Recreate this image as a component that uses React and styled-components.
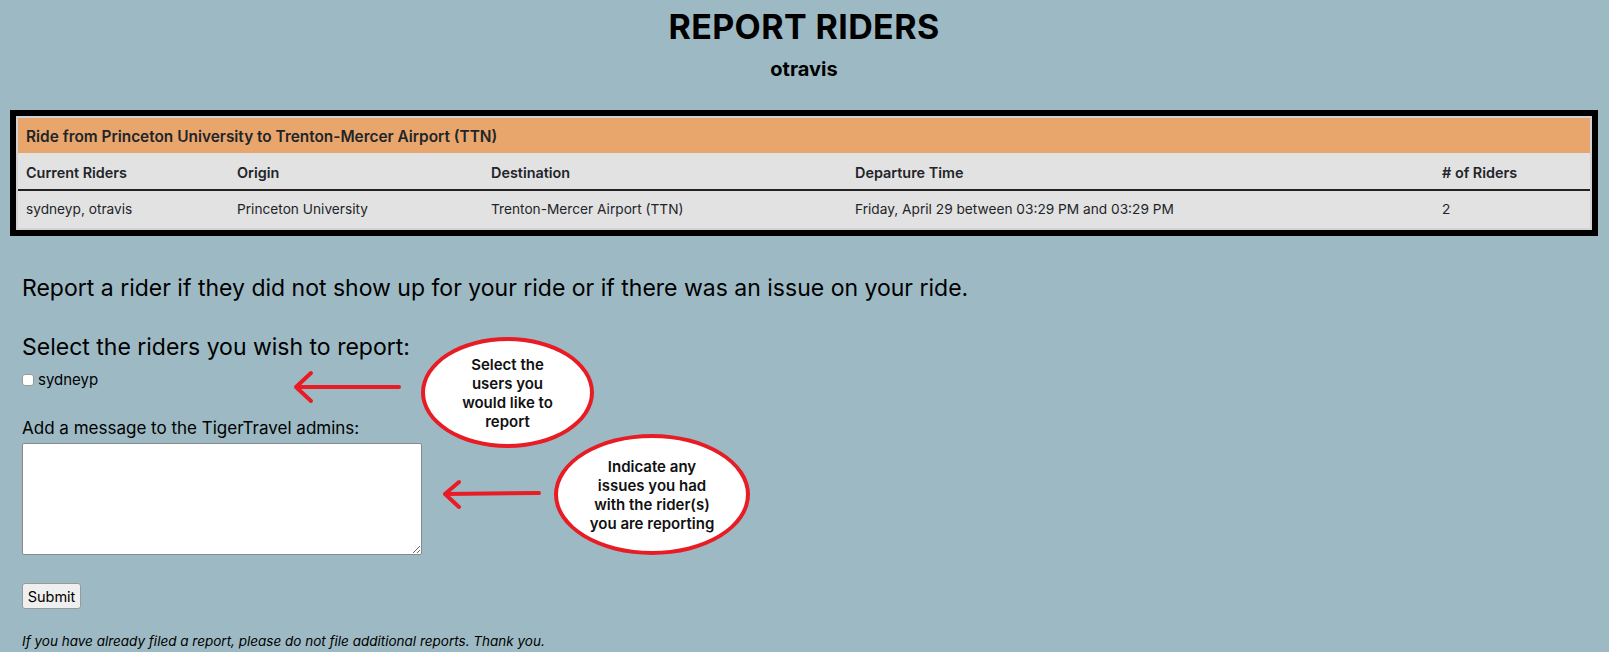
import React from "react";
import styled, { createGlobalStyle } from "styled-components";

const GlobalStyle = createGlobalStyle`
  html, body {
    margin: 0;
    padding: 0;
    background: #9dbac4;
    overflow: hidden;
  }
  body {
    font-family: Inter, "Liberation Sans", sans-serif;
    color: #000;
  }
  * { box-sizing: border-box; }
`;

const Page = styled.div`
  position: relative;
  min-height: 652px;
  padding: 7px 11px 0 10px;
`;

const Title = styled.h1`
  margin: 0;
  font-size: 34px;
  line-height: 40px;
  font-weight: 700;
  letter-spacing: 0.4px;
  text-align: center;
`;

const Username = styled.h3`
  margin: 10px 0 0;
  font-size: 20px;
  line-height: 24px;
  font-weight: 700;
  text-align: center;
`;

const RideBox = styled.div`
  margin-top: 29px;
  border: 6px solid #000;
`;

const RideTable = styled.table`
  width: 100%;
  table-layout: fixed;
  border-collapse: separate;
  border-spacing: 0;
  border: 2px solid #d2d2d2;
  font-size: 14px;
  color: #212529;
`;

const CaptionCell = styled.th`
  background: #e9a66c;
  padding: 9px 8px 7px;
  line-height: 19px;
  font-size: 15.4px;
  text-align: left;
  font-weight: 600;
`;

const HeadCell = styled.th`
  background: #e2e2e2;
  padding: 10px 8px 6px;
  line-height: 20px;
  font-size: 14.4px;
  text-align: left;
  font-weight: 600;
  border-bottom: 2px solid #222;
`;

const Cell = styled.td`
  background: #e2e2e2;
  padding: 8px 8px;
  line-height: 21px;
  font-size: 13.7px;
  font-weight: 400;
`;

const FormArea = styled.div`
  padding-left: 12px;
`;

const Lead = styled.h3`
  margin: 38px 0 0;
  font-size: 23px;
  line-height: 28px;
  font-weight: 400;
`;

const SectionHeading = styled.h3`
  margin: 31px 0 0;
  font-size: 23px;
  line-height: 28px;
  font-weight: 400;
`;

const CheckRow = styled.label`
  margin-top: 9px;
  display: flex;
  align-items: center;
  gap: 4px;
  font-size: 15px;
  line-height: 20px;
`;

const Checkbox = styled.input`
  appearance: none;
  margin: 0;
  width: 12px;
  height: 12px;
  background: #fff;
  border: 1px solid #9a9a9a;
  border-radius: 3px;
`;

const MessageLabel = styled.label`
  display: block;
  margin: 29px 0 6px;
  font-size: 17px;
  line-height: 18px;
`;

const MessageBox = styled.textarea`
  display: block;
  margin: 0;
  width: 400px;
  height: 112px;
  background: #fff;
  border: 1px solid #8a8a8a;
  border-radius: 2px;
  resize: both;
`;

const SubmitButton = styled.button`
  display: block;
  margin-top: 28px;
  width: 59px;
  height: 26px;
  padding: 0;
  background: #efefef;
  border: 1px solid #9a9a9a;
  border-radius: 3px;
  font-family: Inter, "Liberation Sans", sans-serif;
  font-size: 14.5px;
  color: #000;
`;

const Note = styled.p`
  margin: 24px 0 0;
  font-size: 13.5px;
  line-height: 17px;
  font-style: italic;
`;

const Bubble = styled.div`
  position: absolute;
  left: ${(p) => p.$x}px;
  top: ${(p) => p.$y}px;
  width: ${(p) => p.$w}px;
  height: ${(p) => p.$h}px;
  border: 4px solid #e81c24;
  border-radius: 50%;
  background: #fff;
  display: flex;
  align-items: center;
  justify-content: center;
  text-align: center;
  font-size: 15px;
  line-height: 19px;
  font-weight: 600;
  color: #111;
  padding-top: 1px;
`;

const ArrowSvg = styled.svg`
  position: absolute;
  left: ${(p) => p.$x}px;
  top: ${(p) => p.$y}px;
  overflow: visible;
`;

function Arrow({ x, y, w, h, d }) {
  return (
    <ArrowSvg $x={x} $y={y} width={w} height={h} viewBox={`0 0 ${w} ${h}`}>
      <path d={d} fill="none" stroke="#e81c24" strokeWidth="4" strokeLinecap="round" strokeLinejoin="round" />
    </ArrowSvg>
  );
}

const columns = [
  { label: "Current Riders", width: 211 },
  { label: "Origin", width: 254 },
  { label: "Destination", width: 364 },
  { label: "Departure Time", width: 587 },
  { label: "# of Riders", width: 156 },
];

const row = [
  "sydneyp, otravis",
  "Princeton University",
  "Trenton-Mercer Airport (TTN)",
  "Friday, April 29 between 03:29 PM and 03:29 PM",
  "2",
];

export default function App() {
  return (
    <>
      <GlobalStyle />
      <Page>
        <Title>REPORT RIDERS</Title>
        <Username>otravis</Username>
        <RideBox>
          <RideTable>
            <colgroup>
              {columns.map((c) => (
                <col key={c.label} style={{ width: c.width }} />
              ))}
            </colgroup>
            <thead>
              <tr>
                <CaptionCell colSpan={5}>
                  Ride from Princeton University to Trenton-Mercer Airport (TTN)
                </CaptionCell>
              </tr>
              <tr>
                {columns.map((c) => (
                  <HeadCell key={c.label}>{c.label}</HeadCell>
                ))}
              </tr>
            </thead>
            <tbody>
              <tr>
                {row.map((v, i) => (
                  <Cell key={i}>{v}</Cell>
                ))}
              </tr>
            </tbody>
          </RideTable>
        </RideBox>
        <FormArea>
          <Lead>
            Report a rider if they did not show up for your ride or if there was an issue on your ride.
          </Lead>
          <SectionHeading>Select the riders you wish to report:</SectionHeading>
          <CheckRow>
            <Checkbox type="checkbox" />
            sydneyp
          </CheckRow>
          <MessageLabel htmlFor="msg">Add a message to the TigerTravel admins:</MessageLabel>
          <MessageBox id="msg" />
          <SubmitButton type="button">Submit</SubmitButton>
          <Note>
            If you have already filed a report, please do not file additional reports. Thank you.
          </Note>
        </FormArea>

        <Arrow x={294} y={371} w={110} h={32} d="M105 16 L2 16 M17 2 L2 16 L17 30" />
        <Bubble $x={421} $y={337} $w={173} $h={111}>
          Select the
          <br />
          users you
          <br />
          would like to
          <br />
          report
        </Bubble>
        <Arrow x={443} y={480} w={100} h={29} d="M96 13 L2 14 M16 2 L2 14 L16 27" />
        <Bubble $x={554} $y={434} $w={196} $h={121}>
          Indicate any
          <br />
          issues you had
          <br />
          with the rider(s)
          <br />
          you are reporting
        </Bubble>
      </Page>
    </>
  );
}
